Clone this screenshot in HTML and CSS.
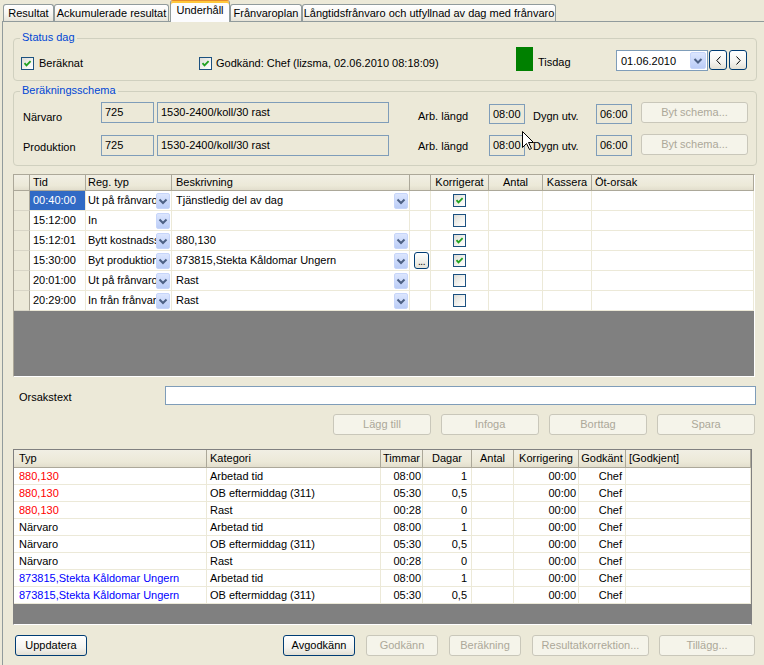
FILE: index.html
```html
<!DOCTYPE html>
<html lang="sv">
<head>
<meta charset="utf-8">
<title>Underhåll</title>
<link rel="stylesheet" href="styles.css">
</head>
<body>
<div class="tabs">
  <div class="tab t1">Resultat</div>
  <div class="tab t2">Ackumulerade resultat</div>
  <div class="tab t3 sel">Underhåll</div>
  <div class="tab t4">Frånvaroplan</div>
  <div class="tab t5">Långtidsfrånvaro och utfyllnad av dag med frånvaro</div>
</div>
<div class="panel">
  <fieldset class="group g-status">
    <legend>Status dag</legend>
    <div class="status-row">
      <label class="chk-label cl1"><span class="chk"><svg width="11" height="11" viewBox="0 0 11 11"><path d="M2.5 5.2 L4.5 7.4 L8.6 3.2" fill="none" stroke="#21A121" stroke-width="1.8"/></svg></span><span>Beräknat</span></label>
      <label class="chk-label cl2"><span class="chk"><svg width="11" height="11" viewBox="0 0 11 11"><path d="M2.5 5.2 L4.5 7.4 L8.6 3.2" fill="none" stroke="#21A121" stroke-width="1.8"/></svg></span><span>Godkänd: Chef (lizsma, 02.06.2010 08:18:09)</span></label>
      <span class="day-color"></span>
      <span class="day-name">Tisdag</span>
      <div class="combo-date"><span class="combo-text">01.06.2010</span><span class="dd dd-big"><svg width="14" height="15" viewBox="0 0 14 15"><path d="M3.5 6 L7 9.5 L10.5 6" fill="none" stroke="#4D6185" stroke-width="2"/></svg></span></div>
      <button class="xbtn nav prev"><svg width="5" height="9" viewBox="0 0 5 9"><path d="M4.5 0.5 L0.8 4.5 L4.5 8.5" fill="none" stroke="#000" stroke-width="1"/></svg></button>
      <button class="xbtn nav next"><svg width="5" height="9" viewBox="0 0 5 9"><path d="M0.5 0.5 L4.2 4.5 L0.5 8.5" fill="none" stroke="#000" stroke-width="1"/></svg></button>
    </div>
  </fieldset>

  <fieldset class="group g-schema">
    <legend>Beräkningsschema</legend>
    <div class="schema-row r1">
      <span class="lbl name">Närvaro</span>
      <span class="fld code">725</span>
      <span class="fld desc">1530-2400/koll/30 rast</span>
      <span class="lbl arb">Arb. längd</span>
      <span class="fld time">08:00</span>
      <span class="lbl dygn">Dygn utv.</span>
      <span class="fld time">06:00</span>
      <button class="xbtn dis byt">Byt schema...</button>
    </div>
    <div class="schema-row r2">
      <span class="lbl name">Produktion</span>
      <span class="fld code">725</span>
      <span class="fld desc">1530-2400/koll/30 rast</span>
      <span class="lbl arb">Arb. längd</span>
      <span class="fld time">08:00</span>
      <span class="lbl dygn">Dygn utv.</span>
      <span class="fld time">06:00</span>
      <button class="xbtn dis byt">Byt schema...</button>
    </div>
  </fieldset>

  <div class="grid1">
    <div class="g1-cols g1-head">
      <div class="h rh"></div>
      <div class="h">Tid</div>
      <div class="h p2">Reg. typ</div>
      <div class="h p4">Beskrivning</div>
      <div class="h"></div>
      <div class="h ctr">Korrigerat</div>
      <div class="h ctr">Antal</div>
      <div class="h ctr">Kassera</div>
      <div class="h">Öt-orsak</div>
    </div>

    <div class="g1-cols g1-row">
      <div class="rh"></div>
      <div class="c selcell">00:40:00</div>
      <div class="c cc p2"><span class="ct">Ut på frånvaro</span><span class="dd"><svg width="12" height="14" viewBox="0 0 12 14"><path d="M2.5 5.5 L6 9 L9.5 5.5" fill="none" stroke="#4D6185" stroke-width="2"/></svg></span></div>
      <div class="c cc p4"><span class="ct">Tjänstledig del av dag</span><span class="dd"><svg width="12" height="14" viewBox="0 0 12 14"><path d="M2.5 5.5 L6 9 L9.5 5.5" fill="none" stroke="#4D6185" stroke-width="2"/></svg></span></div>
      <div class="c"></div>
      <div class="c ck"><span class="chk"><svg width="11" height="11" viewBox="0 0 11 11"><path d="M2.5 5.2 L4.5 7.4 L8.6 3.2" fill="none" stroke="#21A121" stroke-width="1.8"/></svg></span></div>
      <div class="c"></div><div class="c"></div><div class="c"></div>
    </div>

    <div class="g1-cols g1-row">
      <div class="rh"></div>
      <div class="c">15:12:00</div>
      <div class="c cc p2"><span class="ct">In</span><span class="dd"><svg width="12" height="14" viewBox="0 0 12 14"><path d="M2.5 5.5 L6 9 L9.5 5.5" fill="none" stroke="#4D6185" stroke-width="2"/></svg></span></div>
      <div class="c p4"></div>
      <div class="c"></div>
      <div class="c ck"><span class="chk"></span></div>
      <div class="c"></div><div class="c"></div><div class="c"></div>
    </div>

    <div class="g1-cols g1-row">
      <div class="rh"></div>
      <div class="c">15:12:01</div>
      <div class="c cc p2"><span class="ct">Bytt kostnadsställe</span><span class="dd"><svg width="12" height="14" viewBox="0 0 12 14"><path d="M2.5 5.5 L6 9 L9.5 5.5" fill="none" stroke="#4D6185" stroke-width="2"/></svg></span></div>
      <div class="c cc p4"><span class="ct">880,130</span><span class="dd"><svg width="12" height="14" viewBox="0 0 12 14"><path d="M2.5 5.5 L6 9 L9.5 5.5" fill="none" stroke="#4D6185" stroke-width="2"/></svg></span></div>
      <div class="c"></div>
      <div class="c ck"><span class="chk"><svg width="11" height="11" viewBox="0 0 11 11"><path d="M2.5 5.2 L4.5 7.4 L8.6 3.2" fill="none" stroke="#21A121" stroke-width="1.8"/></svg></span></div>
      <div class="c"></div><div class="c"></div><div class="c"></div>
    </div>

    <div class="g1-cols g1-row">
      <div class="rh"></div>
      <div class="c">15:30:00</div>
      <div class="c cc p2"><span class="ct">Byt produktionsorder</span><span class="dd"><svg width="12" height="14" viewBox="0 0 12 14"><path d="M2.5 5.5 L6 9 L9.5 5.5" fill="none" stroke="#4D6185" stroke-width="2"/></svg></span></div>
      <div class="c cc p4"><span class="ct">873815,Stekta Kåldomar Ungern</span><span class="dd"><svg width="12" height="14" viewBox="0 0 12 14"><path d="M2.5 5.5 L6 9 L9.5 5.5" fill="none" stroke="#4D6185" stroke-width="2"/></svg></span></div>
      <div class="c bc"><span class="dots">...</span></div>
      <div class="c ck"><span class="chk"><svg width="11" height="11" viewBox="0 0 11 11"><path d="M2.5 5.2 L4.5 7.4 L8.6 3.2" fill="none" stroke="#21A121" stroke-width="1.8"/></svg></span></div>
      <div class="c"></div><div class="c"></div><div class="c"></div>
    </div>

    <div class="g1-cols g1-row">
      <div class="rh"></div>
      <div class="c">20:01:00</div>
      <div class="c cc p2"><span class="ct">Ut på frånvaro</span><span class="dd"><svg width="12" height="14" viewBox="0 0 12 14"><path d="M2.5 5.5 L6 9 L9.5 5.5" fill="none" stroke="#4D6185" stroke-width="2"/></svg></span></div>
      <div class="c cc p4"><span class="ct">Rast</span><span class="dd"><svg width="12" height="14" viewBox="0 0 12 14"><path d="M2.5 5.5 L6 9 L9.5 5.5" fill="none" stroke="#4D6185" stroke-width="2"/></svg></span></div>
      <div class="c"></div>
      <div class="c ck"><span class="chk"></span></div>
      <div class="c"></div><div class="c"></div><div class="c"></div>
    </div>

    <div class="g1-cols g1-row">
      <div class="rh"></div>
      <div class="c">20:29:00</div>
      <div class="c cc p2"><span class="ct">In från frånvaro</span><span class="dd"><svg width="12" height="14" viewBox="0 0 12 14"><path d="M2.5 5.5 L6 9 L9.5 5.5" fill="none" stroke="#4D6185" stroke-width="2"/></svg></span></div>
      <div class="c cc p4"><span class="ct">Rast</span><span class="dd"><svg width="12" height="14" viewBox="0 0 12 14"><path d="M2.5 5.5 L6 9 L9.5 5.5" fill="none" stroke="#4D6185" stroke-width="2"/></svg></span></div>
      <div class="c"></div>
      <div class="c ck"><span class="chk"></span></div>
      <div class="c"></div><div class="c"></div><div class="c"></div>
    </div>
  </div>

  <div class="orsak-row">
    <span class="orsak-label">Orsakstext</span>
    <span class="orsak-input"></span>
  </div>

  <div class="btn-row1">
    <button class="xbtn dis">Lägg till</button>
    <button class="xbtn dis">Infoga</button>
    <button class="xbtn dis">Borttag</button>
    <button class="xbtn dis">Spara</button>
  </div>

  <div class="grid2">
    <div class="g2-cols g2-head">
      <div class="h p5">Typ</div>
      <div class="h">Kategori</div>
      <div class="h ctr">Timmar</div>
      <div class="h ctr">Dagar</div>
      <div class="h ctr">Antal</div>
      <div class="h ctr">Korrigering</div>
      <div class="h ctr">Godkänt</div>
      <div class="h">[Godkjent]</div>
    </div>
    <div class="g2-cols g2-row"><div class="c p5 red">880,130</div><div class="c">Arbetad tid</div><div class="c num n1">08:00</div><div class="c num n2">1</div><div class="c"></div><div class="c num n3">00:00</div><div class="c num n4">Chef</div><div class="c"></div></div>
    <div class="g2-cols g2-row"><div class="c p5 red">880,130</div><div class="c">OB eftermiddag (311)</div><div class="c num n1">05:30</div><div class="c num n2">0,5</div><div class="c"></div><div class="c num n3">00:00</div><div class="c num n4">Chef</div><div class="c"></div></div>
    <div class="g2-cols g2-row"><div class="c p5 red">880,130</div><div class="c">Rast</div><div class="c num n1">00:28</div><div class="c num n2">0</div><div class="c"></div><div class="c num n3">00:00</div><div class="c num n4">Chef</div><div class="c"></div></div>
    <div class="g2-cols g2-row"><div class="c p5">Närvaro</div><div class="c">Arbetad tid</div><div class="c num n1">08:00</div><div class="c num n2">1</div><div class="c"></div><div class="c num n3">00:00</div><div class="c num n4">Chef</div><div class="c"></div></div>
    <div class="g2-cols g2-row"><div class="c p5">Närvaro</div><div class="c">OB eftermiddag (311)</div><div class="c num n1">05:30</div><div class="c num n2">0,5</div><div class="c"></div><div class="c num n3">00:00</div><div class="c num n4">Chef</div><div class="c"></div></div>
    <div class="g2-cols g2-row"><div class="c p5">Närvaro</div><div class="c">Rast</div><div class="c num n1">00:28</div><div class="c num n2">0</div><div class="c"></div><div class="c num n3">00:00</div><div class="c num n4">Chef</div><div class="c"></div></div>
    <div class="g2-cols g2-row"><div class="c p5 blue">873815,Stekta Kåldomar Ungern</div><div class="c">Arbetad tid</div><div class="c num n1">08:00</div><div class="c num n2">1</div><div class="c"></div><div class="c num n3">00:00</div><div class="c num n4">Chef</div><div class="c"></div></div>
    <div class="g2-cols g2-row"><div class="c p5 blue">873815,Stekta Kåldomar Ungern</div><div class="c">OB eftermiddag (311)</div><div class="c num n1">05:30</div><div class="c num n2">0,5</div><div class="c"></div><div class="c num n3">00:00</div><div class="c num n4">Chef</div><div class="c"></div></div>
  </div>

  <div class="btn-row2">
    <button class="xbtn b-upd">Uppdatera</button>
    <button class="xbtn b-avg">Avgodkänn</button>
    <button class="xbtn dis b-gap">Godkänn</button>
    <button class="xbtn dis b-gap">Beräkning</button>
    <button class="xbtn dis b-gap b-res">Resultatkorrektion...</button>
    <button class="xbtn dis b-til">Tillägg...</button>
  </div>
</div>

<svg class="cursor" width="12" height="19" viewBox="0 0 12 19"><path d="M0.5 0.5 V16.5 L4.5 12.5 L7.5 18.5 L9.5 17.5 L6.5 11.5 H11.5 Z" fill="#fff" stroke="#000" stroke-width="1"/></svg>
</body>
</html>
```

FILE: styles.css
```css
* { box-sizing: border-box; }
html, body { margin: 0; padding: 0; }
body {
  width: 764px;
  height: 665px;
  overflow: hidden;
  position: relative;
  background: #ECE9D8;
  font-family: "Liberation Sans", Arial, sans-serif;
  font-size: 11px;
  line-height: 13px;
  color: #000;
}

/* ---------- tabs ---------- */
.tabs {
  display: flex;
  align-items: flex-end;
  height: 21px;
}
.tab {
  height: 17px;
  border: 1px solid #919B9C;
  border-bottom: 0;
  border-radius: 3px 3px 0 0;
  background: linear-gradient(#FFFFFF, #F6F5F1 55%, #E6E3D8);
  padding-top: 1px;
  line-height: 15px;
  text-align: center;
  white-space: nowrap;
  overflow: hidden;
}
.t1 { margin-left: 3px; width: 51px; }
.t2 { width: 115px; }
.t3 { margin-left: 1px; width: 60px; }
.t4 { width: 72px; }
.t5 { width: 254px; }
.tab.sel {
  height: 22px;
  margin-bottom: -1px;
  position: relative;
  z-index: 1;
  background: #FCFCFE;
  border-top-color: #E68B2C;
  box-shadow: inset 0 2px 0 #FFC83C;
  padding-top: 2px;
}

/* ---------- panel ---------- */
.panel {
  margin-left: 2px;
  width: 800px;
  height: 644px;
  border-top: 1px solid #919B9C;
  border-left: 1px solid #919B9C;
  display: flex;
  flex-direction: column;
  align-items: flex-start;
}

/* ---------- group boxes ---------- */
.group {
  margin: 0 0 0 10px;
  padding: 0;
  width: 744px;
  min-width: 0;
  min-inline-size: 0;
  border: 1px solid #D0D0BF;
  border-radius: 4px;
}
.group legend {
  margin-left: 6px;
  padding: 0 2px 2px;
  color: #0046D5;
  line-height: 13px;
}
.g-status { margin-top: 9px; padding-bottom: 9px; }
.g-schema { margin-top: 3px; padding-top: 3px; padding-bottom: 9px; }

.status-row {
  display: flex;
  align-items: flex-start;
  height: 24px;
  margin-top: 1px;
}
.chk-label {
  display: flex;
  align-items: center;
  height: 13px;
  margin-top: 10px;
  white-space: nowrap;
}
.cl1 { margin-left: 7px; width: 178px; }
.cl2 { width: 317px; }
.cl1 .chk { margin-right: 5px; }
.cl2 .chk { margin-right: 4px; }

.chk {
  flex: none;
  width: 13px;
  height: 13px;
  border: 1px solid #1C5180;
  background: linear-gradient(135deg, #DCDCD7, #F4F4F1 60%, #FFFFFF);
  display: flex;
  align-items: center;
  justify-content: center;
}
.chk svg { display: block; }

.day-color { width: 17px; height: 24px; background: #008000; }
.day-name { margin-left: 5px; margin-top: 9px; width: 78px; }

.combo-date {
  margin-top: 3px;
  width: 92px;
  height: 21px;
  border: 1px solid #7F9DB9;
  background: #FFFFFF;
  padding: 1px;
  display: flex;
  align-items: center;
}
.combo-text { flex: 1; padding-left: 3px; padding-top: 2px; }

.dd {
  flex: none;
  width: 14px;
  height: 16px;
  margin-right: 1px;
  border-radius: 2px;
  border: 1px solid #C6D5FA;
  background: linear-gradient(#DCE6FE, #BBCDF7);
  display: flex;
  align-items: center;
  justify-content: center;
}
.dd svg { display: block; }
.dd-big { width: 16px; height: 17px; margin-right: 0; }

.xbtn {
  font-family: inherit;
  font-size: 11px;
  margin: 0;
  padding: 0;
  border: 1px solid #003C74;
  border-radius: 3px;
  background: linear-gradient(#FFFFFF, #F5F4F0 60%, #E3E0D5);
  color: #000;
  text-align: center;
  line-height: 19px;
  white-space: nowrap;
}
.xbtn.dis {
  border-color: #C9C7BA;
  background: #F5F4EA;
  color: #ACA899;
}
.nav {
  margin-top: 3px;
  width: 18px;
  height: 20px;
  display: flex;
  align-items: center;
  justify-content: center;
}
.prev { margin-left: 1px; }
.next { margin-left: 2px; }

/* ---------- schema rows ---------- */
.schema-row {
  display: flex;
  align-items: flex-start;
  height: 22px;
}
.schema-row + .schema-row { margin-top: 10px; }
.lbl { white-space: nowrap; line-height: 13px; }
.name { margin-left: 9px; width: 78px; }
.arb { margin-left: 29px; width: 71px; }
.dygn { margin-left: 8px; width: 63px; }
.r1 .name { margin-top: 9px; }
.r2 .name { margin-top: 7px; }
.r1 .arb, .r1 .dygn { margin-top: 8px; }
.r2 .arb, .r2 .dygn { margin-top: 6px; }

.fld {
  height: 21px;
  border: 1px solid #7F9DB9;
  padding-left: 3px;
  line-height: 19px;
  white-space: nowrap;
}
.code { width: 53px; }
.desc { margin-left: 3px; width: 232px; }
.time { width: 36px; }
.r1 .time { margin-top: 2px; height: 20px; line-height: 18px; }
.r2 .fld { margin-top: 1px; }
.byt { margin-left: 9px; width: 107px; height: 21px; }

/* ---------- top grid ---------- */
.grid1 {
  margin: 8px 0 0 10px;
  width: 742px;
  height: 203px;
  border: 1px solid;
  border-color: #ACA899 #FFFFFF #FFFFFF #ACA899;
  background: #808080;
}
.g1-cols {
  display: grid;
  grid-template-columns: 16px 56px 86px 238px 21px 58px 54px 49px 162px;
}
.g1-head { height: 16px; }
.h {
  background: linear-gradient(#F1EFE4, #ECE9D8 70%, #E2DECD);
  border-right: 1px solid #ACA899;
  border-bottom: 1px solid #ACA899;
  padding-left: 3px;
  white-space: nowrap;
  overflow: hidden;
}
.g1-head .h { line-height: 15px; }
.g1-row { height: 20px; }
.g1-row .rh {
  background: #ECE9D8;
  border-right: 1px solid #ACA899;
  border-bottom: 1px solid #D8D5C6;
}
.g1-row .c {
  background: #FFFFFF;
  border-right: 1px solid #ECE9D8;
  border-bottom: 1px solid #ECE9D8;
  line-height: 19px;
  padding-left: 3px;
  white-space: nowrap;
  overflow: hidden;
}
.g1-row .selcell { background: #316AC5; color: #FFFFFF; }
.g1-row .cc { display: flex; align-items: center; }
.ct { flex: 1; min-width: 0; overflow: hidden; white-space: nowrap; }
.p2 { padding-left: 2px !important; }
.p4 { padding-left: 4px !important; }
.p5 { padding-left: 5px !important; }
.ctr { text-align: center; padding-left: 0 !important; }
.g1-row .ck {
  display: flex;
  align-items: center;
  justify-content: center;
  padding-left: 0;
}
.g1-row .bc {
  display: flex;
  align-items: center;
  justify-content: flex-end;
  padding: 0 1px 0 0;
}
.dots {
  width: 15px;
  height: 17px;
  border: 1px solid #003C74;
  border-radius: 3px;
  background: linear-gradient(#FFFFFF, #E6E4DA);
  font-size: 10px;
  line-height: 17px;
  letter-spacing: -0.5px;
  text-align: center;
}

/* ---------- orsak ---------- */
.orsak-row {
  display: flex;
  align-items: flex-start;
  margin-top: 9px;
  height: 19px;
}
.orsak-label { margin-left: 16px; width: 146px; margin-top: 5px; }
.orsak-input {
  width: 591px;
  height: 19px;
  border: 1px solid #7F9DB9;
  background: #FFFFFF;
}

.btn-row1 {
  display: flex;
  gap: 10px;
  margin: 9px 0 0 330px;
}
.btn-row1 .xbtn { width: 98px; height: 21px; }

/* ---------- bottom grid ---------- */
.grid2 {
  margin: 14px 0 0 10px;
  width: 739px;
  height: 176px;
  border: 1px solid;
  border-color: #808080 #808080 #FFFFFF #808080;
  background: #808080;
}
.g2-cols {
  display: grid;
  grid-template-columns: 193px 174px 42px 49px 42px 65px 47px 125px;
}
.g2-head { height: 18px; }
.g2-head .h { line-height: 17px; }
.g2-row { height: 17px; }
.g2-row .c {
  background: #FFFFFF;
  border-right: 1px solid #ECE9D8;
  border-bottom: 1px solid #ECE9D8;
  line-height: 16px;
  padding-left: 3px;
  white-space: nowrap;
  overflow: hidden;
}
.g2-row .num { text-align: right; padding-left: 0; }
.n1 { padding-right: 1px; }
.n2 { padding-right: 4px; }
.n3 { padding-right: 2px; }
.n4 { padding-right: 3px; }
.red { color: #FF0000; }
.blue { color: #0000FF; }

/* ---------- bottom buttons ---------- */
.btn-row2 {
  display: flex;
  margin: 10px 0 0 12px;
}
.btn-row2 .xbtn { width: 72px; height: 21px; }
.btn-row2 .b-avg { margin-left: 196px; }
.btn-row2 .b-gap { margin-left: 11px; }
.btn-row2 .b-res { width: 117px; }
.btn-row2 .b-til { margin-left: 10px; width: 96px; }

/* mouse pointer captured in the screenshot */
.cursor {
  position: absolute;
  left: 522px;
  top: 131px;
}
```
